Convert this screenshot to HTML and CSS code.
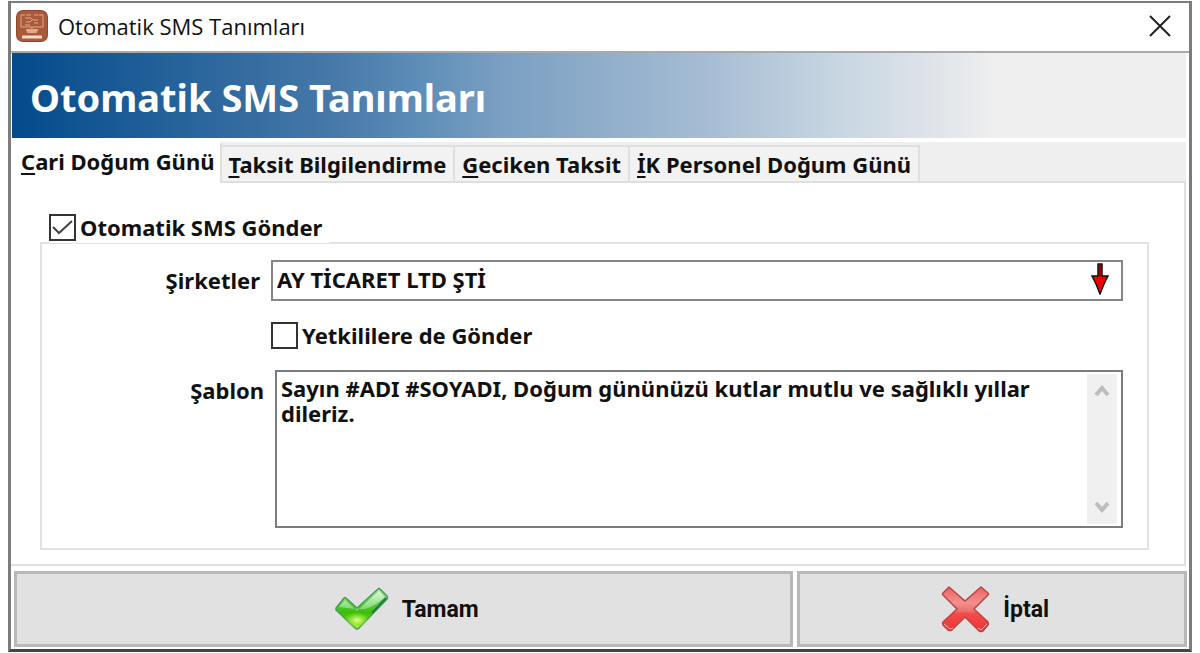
FILE: index.html
```html
<!DOCTYPE html>
<html lang="tr">
<head>
    <meta charset="utf-8">
    <title>Otomatik SMS Tanımları</title>
    <link rel="stylesheet" href="styles.css">
</head>
<body>
    <div class="window">
        <div class="title-bar">
            <svg class="app-icon" viewBox="0 0 32 32" aria-hidden="true">
                <rect x="0" y="0" width="32" height="32" rx="7" fill="#8e4528"/>
                <rect x="1" y="1" width="30" height="30" rx="6" fill="#aa5a3a"/>
                <g fill="none" stroke="#e0a88c" stroke-width="1">
                    <path d="M5 5v12h7M27 5v12h-7M5 5h4M23 5h4"/>
                    <path d="M10 5h5M18 5h4M9 8h6l2 2h5M10 12h4l2-2M18 13h4M9 15h5M12 17h8M16 17v5"/>
                    <path d="M10 20h12M11 22h10" stroke-width="2"/>
                </g>
                <path d="M6 27h20" stroke="#f4d8c8" stroke-width="3"/>
            </svg>
            <span class="title-text">Otomatik SMS Tanımları</span>
            <button class="close-button" type="button" aria-label="Kapat">
                <svg width="22" height="22" viewBox="0 0 22 22" aria-hidden="true">
                    <path d="M1 1l20 20M21 1L1 21" stroke="#222" stroke-width="2" fill="none"/>
                </svg>
            </button>
        </div>

        <div class="banner">
            <h1>Otomatik SMS Tanımları</h1>
        </div>

        <div class="tabs" role="tablist">
            <button class="tab active" type="button" role="tab" aria-selected="true"><u>C</u>ari Doğum Günü</button>
            <button class="tab" type="button" role="tab" aria-selected="false"><u>T</u>aksit Bilgilendirme</button>
            <button class="tab" type="button" role="tab" aria-selected="false"><u>G</u>eciken Taksit</button>
            <button class="tab" type="button" role="tab" aria-selected="false"><u>İ</u>K Personel Doğum Günü</button>
        </div>

        <form class="sms-form" id="sms-form">
            <div class="panel">
                <div class="group">
                    <label class="check group-title">
                        <input type="checkbox" checked>
                        Otomatik SMS Gönder
                    </label>

                    <div class="row">
                        <label class="row-label" for="companies">Şirketler</label>
                        <div class="combo">
                            <select id="companies">
                                <option>AY TİCARET LTD ŞTİ</option>
                            </select>
                            <svg class="combo-arrow" width="20" height="32" viewBox="0 0 20 32" aria-hidden="true">
                                <path d="M8 1h4v12h6l-2 4-2 4-2 5-2 5-2-5-2-5-2-4-2-4h6z" fill="#f00000" stroke="#111" stroke-width="1.5"/>
                                <path d="M10 2v11" stroke="#a00000" stroke-width="2"/>
                            </svg>
                        </div>
                    </div>

                    <div class="row">
                        <span class="row-label"></span>
                        <label class="check">
                            <input type="checkbox">
                            Yetkililere de Gönder
                        </label>
                    </div>

                    <div class="row row-template">
                        <label class="row-label" for="template">Şablon</label>
                        <div class="memo">
                            <textarea id="template" spellcheck="false">Sayın #ADI #SOYADI, Doğum gününüzü kutlar mutlu ve sağlıklı yıllar dileriz.</textarea>
                            <div class="scrollbar" aria-hidden="true">
                                <svg width="16" height="14" viewBox="0 0 16 14">
                                    <path d="M2 11l6-7 6 7" fill="none" stroke="#bdbdbd" stroke-width="4"/>
                                </svg>
                                <svg width="16" height="14" viewBox="0 0 16 14">
                                    <path d="M2 3l6 7 6-7" fill="none" stroke="#bdbdbd" stroke-width="4"/>
                                </svg>
                            </div>
                        </div>
                    </div>
                </div>
            </div>

            <div class="actions">
                <button class="action" type="submit">
                    <svg width="54" height="44" viewBox="0 0 54 44" aria-hidden="true">
                        <defs>
                            <linearGradient id="green" x1="0" y1="0" x2="0" y2="1">
                                <stop offset="0" stop-color="#a8e6a0"/>
                                <stop offset="0.45" stop-color="#4cc630"/>
                                <stop offset="0.6" stop-color="#3cbc08"/>
                                <stop offset="1" stop-color="#a4f030"/>
                            </linearGradient>
                            <linearGradient id="shine" x1="0" y1="0" x2="0" y2="1">
                                <stop offset="0" stop-color="#f4fff4"/>
                                <stop offset="1" stop-color="#8ade80"/>
                            </linearGradient>
                            <radialGradient id="glow" cx="0.5" cy="0.5" r="0.5">
                                <stop offset="0" stop-color="#e4ff90"/>
                                <stop offset="1" stop-color="#9cf030" stop-opacity="0"/>
                            </radialGradient>
                        </defs>
                        <path d="M1 21l8-10q1-1 2 0l11 10L43 2q1-1 2 0l7 7q1 1 0 3L24 41q-2 2-4 0L1 23z" fill="url(#green)" stroke="#4a9c5c" stroke-width="1.5"/>
                        <path d="M4 20l6-7 12 11L44 4l6 6q-10 9-20 12-14 0-26-2z" fill="url(#shine)" opacity="0.75"/>
                        <ellipse cx="22" cy="33" rx="12" ry="8" fill="url(#glow)"/>
                        <path d="M51 11L37 26" stroke="#207a45" stroke-width="2"/>
                    </svg>
                    Tamam
                </button>
                <button class="action" type="button">
                    <svg width="49" height="48" viewBox="0 0 49 48" aria-hidden="true">
                        <defs>
                            <linearGradient id="red" x1="0" y1="0" x2="0" y2="1">
                                <stop offset="0" stop-color="#f06060"/>
                                <stop offset="0.35" stop-color="#f29090"/>
                                <stop offset="0.54" stop-color="#ee7070"/>
                                <stop offset="0.6" stop-color="#f24a4a"/>
                                <stop offset="1" stop-color="#f03434"/>
                            </linearGradient>
                        </defs>
                        <path d="M8 2L24 16 40 2l7 6q1 1 0 2L33 24l14 13q1 2 0 3l-5 6q-2 1-4 0L24 32 11 45q-2 1-4 0l-5-5q-1-2 0-3l14-13L2 10q-1-1 0-2z" fill="url(#red)" stroke="#b84848" stroke-width="1.5"/>
                        <path d="M3 39l6 5 3-1M46 39l-6 6-3-2" fill="none" stroke="#f8b4b4" stroke-width="1"/>
                    </svg>
                    İptal
                </button>
            </div>
        </form>
    </div>
</body>
</html>
```
FILE: styles.css
```css
* {
    box-sizing: border-box;
}

body {
    margin: 0;
    padding: 1px 8px;
    background-color: #fff;
    color: #111;
    font-family: "Noto Sans", "Open Sans", sans-serif;
    font-size: 22px;
    font-weight: 700;
}

button,
select,
textarea {
    font: inherit;
    color: inherit;
}

.window {
    display: flex;
    flex-direction: column;
    min-height: calc(100vh - 2px);
    border: 3px solid #7a7d7c;
    border-top-width: 2px;
    border-bottom-color: #444;
    background-color: #fff;
}

/* Title bar */
.title-bar {
    display: flex;
    align-items: center;
    height: 50px;
    padding: 0 18px 2px 5px;
    border-bottom: 2px solid #a9a9a9;
}

.app-icon {
    width: 32px;
    height: 32px;
}

.title-text {
    flex: 1;
    margin-left: 10px;
    font-family: "Open Sans", sans-serif;
    font-weight: 400;
}

.close-button {
    display: flex;
    padding: 0;
    border: none;
    background: none;
}

/* Banner */
.banner {
    display: flex;
    align-items: center;
    height: 85px;
    margin: 0 3px 0 1px;
    padding: 2px 18px 0;
    background: linear-gradient(to right, #034b8c 0%, #4678a8 27%, #5b8bb6 34%, #7ba0c2 42%, #a6bcd4 59%, #c9d7e2 71%, #dbe1e8 77%, #efefef 84%);
}

.banner h1 {
    margin: 0;
    color: #fff;
    font-size: 38px;
    line-height: 48px;
}

/* Tabs */
.tabs {
    display: flex;
    align-items: flex-end;
    height: 45px;
    margin-right: 3px;
    border-top: 4px solid #fff;
    border-bottom: 2px solid #dfdfdf;
    background-color: #efefef;
}

.tab {
    height: 36px;
    padding: 0 7px;
    border: 2px solid #dfdfdf;
    border-width: 2px 2px 0 0;
    background-color: #f2f2f2;
    line-height: 32px;
    white-space: nowrap;
}

.tab.active {
    height: 41px;
    margin-bottom: -2px;
    padding: 0 5px 6px 10px;
    border-color: #fff #dfdfdf;
    background-color: #fff;
}

.tab u {
    text-decoration-thickness: 2px;
    text-underline-offset: 3px;
}

/* Form */
.sms-form {
    flex: 1;
    display: flex;
    flex-direction: column;
}

.panel {
    flex: 1;
    margin-right: 3px;
    padding: 59px 35px 14px 29px;
    border-right: 2px solid #dfdfdf;
    border-bottom: 2px solid #dfdfdf;
}

.group {
    display: flex;
    flex-direction: column;
    gap: 21px;
    padding: 0 24px 20px 0;
    border: 2px solid #e2e2e2;
}

.group-title {
    align-self: flex-start;
    height: 32px;
    margin: -33px 0 -4px 7px;
    padding-right: 8px;
    background-color: #fff;
}

.check {
    display: flex;
    align-items: center;
    gap: 4px;
    line-height: 27px;
}

.check input {
    appearance: none;
    width: 27px;
    height: 27px;
    margin: 0;
    border: 2px solid #333;
    background: #fff;
}

.check input:checked {
    background: #fff url("data:image/svg+xml,%3Csvg xmlns='http://www.w3.org/2000/svg' viewBox='0 0 23 23'%3E%3Cpath d='M2 11l6 6L21 5' fill='none' stroke='%23444' stroke-width='2'/%3E%3C/svg%3E") center no-repeat;
}

.row {
    display: flex;
    gap: 11px;
}

.row-label {
    width: 218px;
    line-height: 41px;
    text-align: right;
}

span.row-label {
    line-height: 27px;
}

.combo {
    position: relative;
    flex: 1;
}

.combo select {
    display: block;
    width: 100%;
    height: 41px;
    padding: 0 40px 3px 4px;
    border: 2px solid #858585;
    border-radius: 0;
    background-color: #fff;
    appearance: none;
}

.combo-arrow {
    position: absolute;
    top: 3px;
    right: 13px;
    pointer-events: none;
}

.row-template .row-label {
    width: 222px;
}

.memo {
    flex: 1;
    display: flex;
    height: 158px;
    padding: 2px 4px 2px 2px;
    border: 2px solid #7c7c7c;
}

.memo textarea {
    flex: 1;
    min-width: 0;
    padding: 2px 2px 0;
    border: none;
    outline: none;
    resize: none;
    overflow: hidden;
    line-height: 25px;
}

.scrollbar {
    display: flex;
    flex-direction: column;
    align-items: center;
    justify-content: space-between;
    width: 30px;
    padding: 10px 0;
    background-color: #f0f0f0;
}

/* Bottom buttons */
.actions {
    display: grid;
    grid-template-columns: 2fr 1fr;
    gap: 4px;
    padding: 5px 2px 2px 3px;
}

.action {
    display: flex;
    align-items: center;
    justify-content: center;
    gap: 13px;
    height: 76px;
    padding: 0 0 0 6px;
    border: 3px solid #b8b8b8;
    background-color: #e1e1e1;
    font-family: Roboto, sans-serif;
    font-size: 23px;
}
```
